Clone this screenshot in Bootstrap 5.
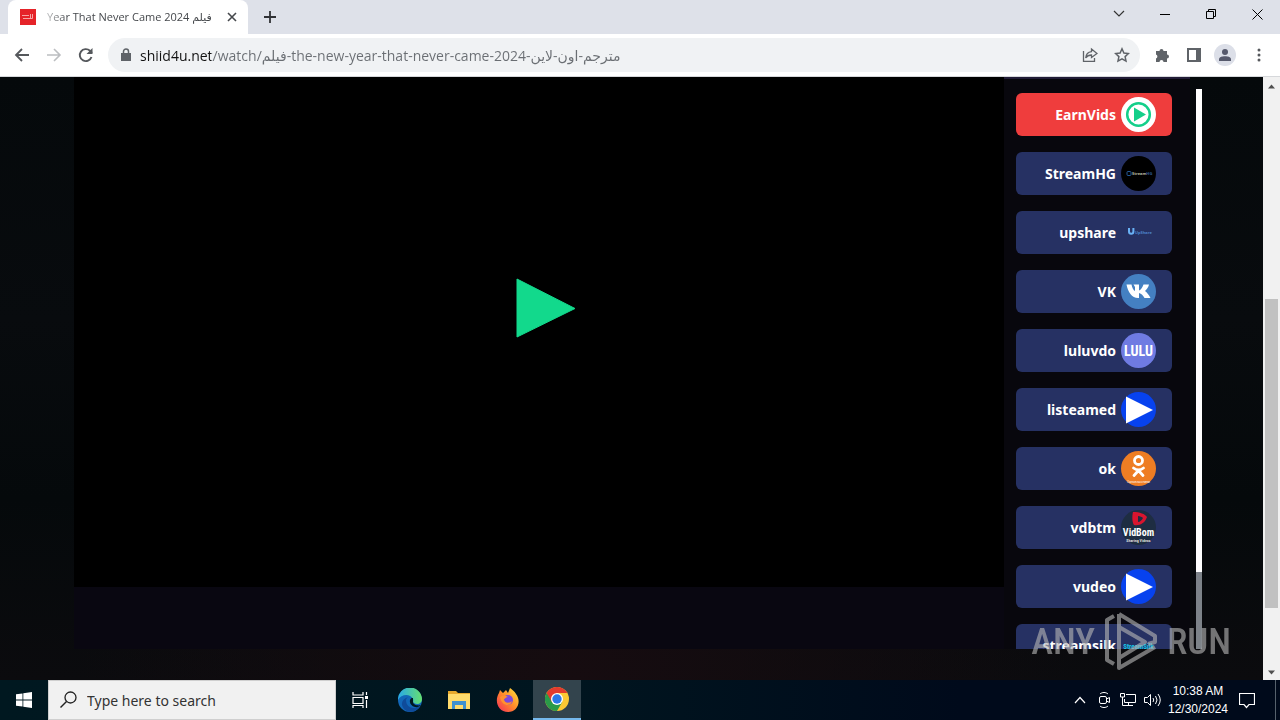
<!DOCTYPE html>
<html lang="en">
<head>
<meta charset="utf-8">
<meta name="viewport" content="width=device-width, initial-scale=1">
<title>Year That Never Came 2024</title>
<link href="https://cdn.jsdelivr.net/npm/bootstrap@5.3.0/dist/css/bootstrap.min.css" rel="stylesheet">
<style>
body{font-family:"Noto Sans","Open Sans","DejaVu Sans",sans-serif;font-size:14px;background:#06090b}
svg{display:block;flex:none}
button{padding:0;border:0;background:none;color:inherit}
.tabstrip{height:34px;background:#dee1e9}
.tab{width:240px;margin-left:8px;padding:0 10px 0 12px;background:#fff;border-radius:8px 8px 0 0;font-size:11px;font-family:"Open Sans","DejaVu Sans",sans-serif;color:#45484c}
.tab-title{width:168px;line-height:34px;-webkit-mask:linear-gradient(90deg,#0005,#000 20px);mask:linear-gradient(90deg,#0005,#000 20px)}
.win button{width:46px;height:28px}
.toolbar{height:43px;background:#fff;border-bottom:1px solid #d6d8db;padding:0 14px 0 12px;color:#5f6368}
.omnibox{height:34px;border-radius:17px;background:#f0f2f4;padding:0 10px 0 12px;margin-right:14px}
.omnibox input{border:0;outline:0;padding:0;margin-left:8px;font-size:14px;font-family:"Open Sans","DejaVu Sans",sans-serif;color:#5f6368;-webkit-text-fill-color:transparent;background:linear-gradient(90deg,#111 71px,#6a6e73 71px);-webkit-background-clip:text;background-clip:text}
.avatar{width:22px;height:22px;border-radius:50%;background:#dcdfe8;margin-left:12px}
.viewport{background:radial-gradient(ellipse at 45% 100%,#160c10,#160c1000 50%),linear-gradient(#05090b,#080b0e 40%,#05090b 70%,#0b0b0e)}
.watch{padding:0 61px 31px 74px}
.player-pane{background:#090711;padding-bottom:62px}
.player{background:#000}
.servers{width:186px;background:#08070d;border-top:2px solid #211c36;padding:14px 18px 0 12px}
.server{height:43px;margin-bottom:16px;border-radius:6px;background:#263163;color:#fff;font-weight:700;font-size:14px;padding-right:16px;gap:5px;flex:none}
.server.picked{background:#ef3d3d}
.narrow{font-family:"Roboto Condensed","Liberation Sans Narrow","DejaVu Sans Condensed",sans-serif}
.list-scroll{width:6px;margin:12px 0 0 6px;background:#fff}
.list-thumb{height:77px;background:#7d8389}
.page-scroll{width:17px;background:#f1f1f1;padding:0 2px}
.page-scroll svg{margin:7px auto 5px}
.page-thumb{background:#c1c1c1;flex:309 0 0}
.before{flex:205 0 0}.after{flex:55 0 0}
.brandmark{right:33px;bottom:6px;color:#b5b5b5;opacity:.62;font-size:37px;font-weight:500;line-height:64px;gap:6px}
.taskbar{height:40px;background:linear-gradient(90deg,#001820,#00151f 45%,#000a1b 75%,#000a1b);color:#fff}
.taskbar button{height:40px}
.start{width:48px}
.finder{width:288px;background:#f1f1f1;padding-left:11px;border:1px solid #cfcfcf}
.finder input{border:0;outline:0;background:none;font-size:14px;padding:0;margin-left:2px;width:220px}
.finder input::placeholder{color:#333;opacity:1}
.app{width:48px}
.app.open{background:#33444d;border-bottom:2px solid #76b9ed}
.apps{gap:1px}
.apps .app:first-child{margin-right:1px}
.tray{gap:8px;padding-right:4px}
.clock{font-size:12px;line-height:18px;width:58px;font-family:"Liberation Sans",sans-serif}
.notice{margin:0 12px 0 4px}
.edge-line{width:1px;height:40px;background:#56616c}
</style>
</head>
<body class="d-flex flex-column vh-100 overflow-hidden">
<header>
 <div class="tabstrip d-flex">
  <div class="tab d-flex align-items-center">
   <svg width="16" height="16"><path fill="#e52329" d="M0 0h16v16H0z"/><path d="M2 6.500h7M3 9.500h9.500V5M10.500 5v4" fill="none" stroke="#f6a5a5"/></svg>
   <span class="tab-title text-nowrap overflow-hidden ms-auto">Year That Never Came 2024 فيلم</span>
   <button class="ms-auto" aria-label="Close tab"><svg width="12" height="12"><path d="M2 2l8 8M10 2l-8 8" stroke="#45484c" stroke-width="1.6"/></svg></button>
  </div>
  <button class="ms-3" aria-label="New tab"><svg width="12" height="12"><path d="M6 0v12M0 6h12" stroke="#303236" stroke-width="1.8"/></svg></button>
  <div class="win d-flex ms-auto">
   <button aria-label="Search tabs"><svg class="mx-auto" width="12" height="12"><path d="M1 3l5 5 5-5" fill="none" stroke="#333" stroke-width="1.2"/></svg></button>
   <button aria-label="Minimize"><svg class="mx-auto" width="10" height="10"><path d="M0 5.500h10" stroke="#000"/></svg></button>
   <button aria-label="Restore"><svg class="mx-auto" width="10" height="10"><path d="M.5 2.500h7v7h-7zM2.500 2.500v-2h7v7h-2" fill="none" stroke="#000"/></svg></button>
   <button aria-label="Close"><svg class="mx-auto" width="11" height="11"><path d="M.5.5l10 10M10.500.5l-10 10" stroke="#000"/></svg></button>
  </div>
 </div>
 <div class="toolbar d-flex align-items-center">
  <button class="me-2 pe-1" aria-label="Back"><svg width="20" height="20" fill="none" stroke="#55585c" stroke-width="1.800"><path d="M17 10H4M10 4l-6 6 6 6"/></svg></button>
  <button class="me-2 pe-1" aria-label="Forward"><svg width="20" height="20" fill="none" stroke="#bcbec1" stroke-width="1.600"><path d="M3 10h13M10 4l6 6-6 6"/></svg></button>
  <button class="me-2 pe-1" aria-label="Reload"><svg width="20" height="20"><path d="M15.500 12A6 6 0 1 1 14 5.800L16 8" fill="none" stroke="#55585c" stroke-width="1.900"/><path d="M16.500 3v6h-6z" fill="#55585c"/></svg></button>
  <div class="omnibox d-flex align-items-center flex-grow-1">
   <svg width="12" height="14"><path d="M1 5h10v8H1z" fill="#5f6368"/><path d="M3.500 6V3.500a2.500 2.500 0 0 1 5 0V6" fill="none" stroke="#5f6368" stroke-width="1.500"/></svg>
   <input class="flex-grow-1" type="text" aria-label="Address" value="shiid4u.net/watch/فيلم-the-new-year-that-never-came-2024-مترجم-اون-لاين">
   <button class="me-3" aria-label="Share"><svg width="16" height="16" fill="none" stroke="#5f6368" stroke-width="1.300"><path d="M1.500 4v10.300h11V11"/><path d="M9.500 2l5.500 4.500-5.500 4V8C7 8 5 9 3.700 11 4 7.500 6 5 9.500 4.600z"/></svg></button>
   <button aria-label="Bookmark"><svg width="16" height="16"><path d="M8 1.800l1.900 4.200 4.500.5-3.300 3.100.9 4.500L8 11.800l-4 2.300.9-4.500L1.600 6.500 6.100 6z" fill="none" stroke="#5f6368" stroke-width="1.500"/></svg></button>
  </div>
  <button aria-label="Extensions"><svg width="16" height="16"><path d="M2 4h3.500a2 2 0 1 1 4 0H13v3.500a2 2 0 1 1 0 4V15H9.500a2 2 0 0 0-4 0H2v-3.600a2 2 0 0 0 0-3.800z" fill="#5f6368"/></svg></button>
  <button class="ms-3" aria-label="Side panel"><svg width="16" height="16"><path d="M1 1h14v14H1z" fill="#5f6368"/><path d="M3 3h7v10H3z" fill="#fff"/></svg></button>
  <button class="avatar me-2 d-flex align-items-center justify-content-center" aria-label="Profile"><svg width="14" height="14" fill="#56596c"><circle cx="7" cy="4" r="3"/><path d="M1 13v-1.500C1 9 4 8.300 7 8.300s6 .7 6 3.200V13z"/></svg></button>
  <button class="ms-1" aria-label="Menu"><svg width="18" height="16" fill="#55585c"><circle cx="11" cy="3" r="1.500"/><circle cx="11" cy="8" r="1.500"/><circle cx="11" cy="13" r="1.500"/></svg></button>
 </div>
</header>

<div class="viewport d-flex flex-grow-1 overflow-hidden position-relative">
 <main class="watch d-flex flex-grow-1 overflow-hidden">
  <section class="player-pane d-flex flex-grow-1">
   <div class="player d-flex flex-grow-1 align-items-center justify-content-center pb-5">
    <button class="ps-3" aria-label="Play"><svg width="62" height="112"><path d="M1 27l58 29.500L1 85z" fill="#12d98c" stroke="#12d98c" stroke-linejoin="round"/></svg></button>
   </div>
  </section>
  <nav class="servers d-flex flex-column overflow-hidden" aria-label="Servers">
   <button class="server picked d-flex align-items-center justify-content-end">EarnVids
    <svg width="35" height="35"><circle cx="17.500" cy="17.500" r="17.500" fill="#fff"/><circle cx="17.500" cy="17.500" r="11.300" fill="none" stroke="#14cf8a" stroke-width="2.500"/><path d="M13 10.500l12 7-12 7z" fill="#14cf8a"/></svg></button>
   <button class="server d-flex align-items-center justify-content-end">StreamHG
    <svg width="35" height="35"><circle cx="17.500" cy="17.500" r="17.500"/><rect x="6" y="15.500" width="4" height="4" rx="1" fill="none" stroke="#245a9a"/><text x="11" y="19" font-size="4" font-weight="700" fill="#bbb8a0">Stream<tspan fill="#315f9c">HG</tspan></text></svg></button>
   <button class="server d-flex align-items-center justify-content-end">upshare
    <svg width="35" height="35"><path d="M8 13v3.500a2.200 2.200 0 0 0 4.400 0V13" fill="none" stroke="#69b1f5" stroke-width="2"/><text x="14" y="19" font-size="4" fill="#4c83c9">UpShare</text></svg></button>
   <button class="server d-flex align-items-center justify-content-end">VK
    <svg width="35" height="35"><circle cx="17.500" cy="17.500" r="17.500" fill="#4480c2"/><path d="M5.500 10.500h5c.5 3 2 6 3.500 6.500V13l-1.500-2.500H18v6c2-.5 3.500-3.500 4.500-6H28c-.5 3-2.500 5-4 6.500 2 1.500 4 4 5.500 7h-6c-1.500-2.500-3-4.500-5.500-5v5C11 24.500 7 18 5.500 10.500z" fill="#fff"/></svg></button>
   <button class="server d-flex align-items-center justify-content-end">luluvdo
    <svg width="35" height="35"><circle cx="17.500" cy="17.500" r="17.500" fill="#6f7be2"/><text class="narrow" x="17.500" y="22.500" font-size="14" text-anchor="middle" fill="#fff">LULU</text></svg></button>
   <button class="server d-flex align-items-center justify-content-end">listeamed
    <svg width="35" height="35"><circle cx="17.500" cy="17.500" r="17.500" fill="#0742ef"/><path d="M5 4.500l27 13.500L5 31.500z" fill="#fff"/></svg></button>
   <button class="server d-flex align-items-center justify-content-end">ok
    <svg width="35" height="35"><circle cx="17.500" cy="17.500" r="17.500" fill="#ee7d23"/><g fill="none" stroke="#fff" stroke-width="2.800" stroke-linecap="round"><circle cx="17.500" cy="9.500" r="4"/><path d="M12.500 17c3 2.300 7 2.300 10 0M17.500 19.500l-4.500 5M17.500 19.500l4.500 5"/></g><text x="17.500" y="32" font-size="3" font-weight="400" text-anchor="middle" fill="#fff">Одноклассники</text></svg></button>
   <button class="server d-flex align-items-center justify-content-end">vdbtm
    <svg width="35" height="35"><circle cx="17.500" cy="17.500" r="17.500" fill="#1e2d42"/><path d="M12 2c7 0 12 2 14 5-2 6-7 9-13 8-2-3-2-9-1-13zm5 4v6c2 0 4-2 5-4-1-1-3-2-5-2z" fill="#d8152f" fill-rule="evenodd"/><text class="narrow" x="17.500" y="26" font-size="10" text-anchor="middle" fill="#fff">VidBom</text><text class="narrow" x="17.500" y="32" font-size="4" text-anchor="middle" fill="#ddd">Sharing Videos</text></svg></button>
   <button class="server d-flex align-items-center justify-content-end">vudeo
    <svg width="35" height="35"><circle cx="17.500" cy="17.500" r="17.500" fill="#0742ef"/><path d="M5 4.500l27 13.500L5 31.500z" fill="#fff"/></svg></button>
   <button class="server d-flex align-items-center justify-content-end">streamsilk
    <svg width="35" height="35"><text class="narrow" x="17.500" y="21" font-size="7" text-anchor="middle" fill="#16c6e8">StreamSilk</text></svg></button>
  </nav>
  <div class="list-scroll d-flex flex-column justify-content-end"><div class="list-thumb"></div></div>
 </main>
 <div class="page-scroll d-flex flex-column">
  <svg width="7" height="5"><path d="M0 4.500L3.500.5 7 4.500z" fill="#505050"/></svg>
  <div class="before"></div><div class="page-thumb"></div><div class="after"></div>
  <svg width="7" height="5"><path d="M0 .5l3.500 4L7 .5z" fill="#505050"/></svg>
 </div>
 <div class="brandmark narrow position-absolute d-flex align-items-center pe-3" aria-hidden="true">
  <span>ANY</span>
  <svg width="60" height="64" fill="none" stroke="#b5b5b5" stroke-width="4" stroke-linejoin="round"><path d="M13 6L6 10v40l7 4M18 4v21M18 39v19l36-21M18 4l36 22v6l-7 2M18 17l26 15-26 16z"/></svg>
  <span>RUN</span>
 </div>
</div>

<footer class="taskbar d-flex align-items-center">
 <button class="start" aria-label="Start"><svg class="mx-auto" width="16" height="16" fill="#fff"><path d="M0 2.300L6.500 1.400v6.200H0zM7.300 1.300L16 0v7.600H7.300zM0 8.400h6.500v6.200L0 13.700zM7.300 8.400H16V16l-8.700-1.300z"/></svg></button>
 <label class="finder d-flex align-items-center align-self-stretch gap-2"><svg width="17" height="18"><circle cx="10.500" cy="6.500" r="5.500" fill="none" stroke="#222" stroke-width="1.300"/><path d="M6.500 10.500L.5 16.500" stroke="#222" stroke-width="1.400"/></svg><input type="text" placeholder="Type here to search" aria-label="Type here to search"></label>
 <div class="apps d-flex">
  <button class="app" aria-label="Task view"><svg class="mx-auto" width="17" height="16" fill="none" stroke="#fff" stroke-width="1.200"><path d="M1 0v3h10V0M1 5.500h10v6H1zM1 16v-2.500h10V16M14.500 0v3M14.500 8v8"/><path d="M13 4h3v3h-3z" fill="#fff" stroke="none"/></svg></button>
  <button class="app" aria-label="Edge"><svg class="mx-auto" width="24" height="24"><defs><linearGradient id="eg"><stop stop-color="#28a9e8"/><stop offset="1" stop-color="#66df70"/></linearGradient></defs><circle cx="12" cy="12" r="12" fill="#1267b8"/><path d="M0 12A12 12 0 0 1 24 11c0 5-5 6-8 4-2-1 0-2-1-4C12 5 3 6 0 12z" fill="url(#eg)"/><path d="M8 12c0 8 8 10 14 6-3 6-11 8-16 3-4-5-2-10 4-12-1 1-2 2-2 3z" fill="#0f4b9a"/><path d="M15 10c-4-1-5 7 2 9 2 .5 5-.5 6-2-3 1-8 0-8-3z" fill="#001820"/></svg></button>
  <button class="app" aria-label="File Explorer"><svg class="mx-auto" width="22" height="20"><path d="M0 1h8l2 2h12v16H0z" fill="#e7a92d"/><path d="M0 4h22v15H0z" fill="#ffdb6c"/><path d="M4 11h14v8h-3v-4H7v4H4z" fill="#3f91d0"/></svg></button>
  <button class="app" aria-label="Firefox"><svg class="mx-auto" width="24" height="24"><defs><linearGradient id="fx" x1="1" y1="0" x2="0" y2="1"><stop stop-color="#ffe63d"/><stop offset=".5" stop-color="#ff8a2a"/><stop offset="1" stop-color="#f5275d"/></linearGradient></defs><path d="M3 5l1-3 3 3 3-3 2 3 2-5c4 3 5 4 6 6 6 8 1 18-8 18C2 24-2 13 3 5z" fill="url(#fx)"/><circle cx="12" cy="12" r="5" fill="#7b48dc"/><path d="M4 9c3-2 6-1 8 0-2 0-3 2-4 2 0 4 5 5 8 2-1 6-10 6-12-4z" fill="#ff9130"/></svg></button>
  <button class="app open" aria-label="Chrome"><svg class="mx-auto" width="24" height="24"><circle cx="12" cy="12" r="12" fill="#fcc934"/><path d="M1.600 6A12 12 0 0 0 12 24l5.200-9L12 12z" fill="#2a9a49"/><path d="M1.600 6a12 12 0 0 1 20.800 0H12l-5.200 9z" fill="#e33b2e"/><circle cx="12" cy="12" r="6" fill="#fff"/><circle cx="12" cy="12" r="4.700" fill="#2b78e8"/></svg></button>
 </div>
 <div class="tray d-flex align-items-center ms-auto">
  <button aria-label="Hidden icons"><svg width="16" height="16"><path d="M3 11l5-5.500 5 5.500" fill="none" stroke="#fff" stroke-width="1.200"/></svg></button>
  <button aria-label="Meet now"><svg width="16" height="18" fill="none" stroke="#fff"><rect x="3.500" y="5.500" width="7" height="7" rx="1.500"/><path d="M10.500 8l3-1.500v5l-3-1.500M4 3c2-2 6-2 8 0M4 15c2 2 6 2 8 0"/></svg></button>
  <button aria-label="Network"><svg width="16" height="16" fill="none" stroke="#fff"><path d="M6 2.500h9.500v8H4.500V7M8.500 10.500v3M5 13.500h8M.5 1.500h4v3.500h-4zM2.500 5v8.500H5"/></svg></button>
  <button aria-label="Volume"><svg width="17" height="16" fill="none" stroke="#fff"><path d="M.5 5.500h3l3-3v11l-3-3h-3zM9 6q1.500 2 0 4M11.500 4q3 4 0 8M14 2q4.500 6 0 12"/></svg></button>
  <div class="clock d-flex flex-column align-items-center text-nowrap"><span>10:38 AM</span><span>12/30/2024</span></div>
  <button class="notice" aria-label="Notifications"><svg width="16" height="17"><path d="M.5 1.500h15v11H10l-2.500 3-2.500-3H.5z" fill="none" stroke="#fff" stroke-width="1.200"/></svg></button>
  <div class="edge-line"></div>
 </div>
</footer>
<script src="https://cdn.jsdelivr.net/npm/bootstrap@5.3.0/dist/js/bootstrap.bundle.min.js"></script>
</body>
</html>
